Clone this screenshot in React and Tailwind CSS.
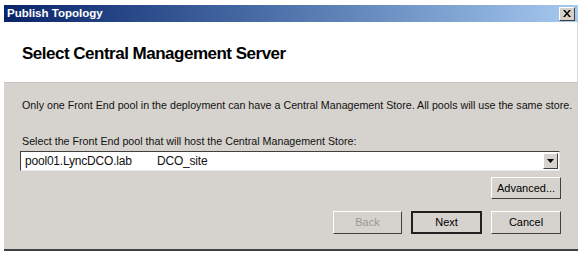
export default function App() {
  const font = { fontFamily: "Tahoma, 'DejaVu Sans', sans-serif" };
  return (
    <div className="w-[582px] h-[254px] bg-white overflow-hidden">
      <div className="ml-[4px] mt-[5px] w-[574px] flex flex-col" style={font}>
        {/* Title bar */}
        <div className="h-[17px] flex items-center justify-between bg-gradient-to-r from-[#0a246a] to-[#a6caf0] pl-[3px] pr-[3px]">
          <span className="text-white font-bold text-[11.5px] leading-none font-['Liberation_Sans',sans-serif]">Publish Topology</span>
          <div className="w-[16px] h-[14px] bg-[#d4d0c8] border border-t-white border-l-white border-r-[#404040] border-b-[#404040] flex items-center justify-center">
            <svg width="8" height="7" viewBox="0 0 8 7">
              <path d="M0 0h2l2 2.5L6 0h2L5 3.5 8 7H6L4 4.5 2 7H0l3-3.5z" fill="#000" />
            </svg>
          </div>
        </div>
        {/* Header */}
        <div className="h-[60px] bg-white border-r border-[#d8d8d8] pl-[18px] pt-[21px]">
          <div className="text-[17px] font-bold text-black leading-[22px] tracking-[-0.5px] font-['Liberation_Sans',sans-serif]">Select Central Management Server</div>
        </div>
        {/* Body */}
        <div className="h-[167px] bg-[#d6d3ce] border-t border-[#c8c5c0] flex flex-col pl-[18px] pr-[16px] font-['Liberation_Sans',sans-serif] text-[10.7px] text-[#111]">
          <div className="mt-[15px] leading-[14px] whitespace-nowrap">Only one Front End pool in the deployment can have a Central Management Store. All pools will use the same store.</div>
          <div className="mt-[22px] leading-[14px] whitespace-nowrap">Select the Front End pool that will host the Central Management Store:</div>
          <div className="mt-[3px] ml-[-2px] w-[540px] h-[20px] bg-white border border-t-[#404040] border-l-[#404040] border-r-[#e8e8e8] border-b-[#e8e8e8] flex items-center">
            <div className="flex-1 flex items-center text-[12px] pl-[4px] tracking-[-0.2px]">
              <span className="w-[132px]">pool01.LyncDCO.lab</span>
              <span>DCO_site</span>
            </div>
            <div className="w-[15px] h-[16px] mr-[1px] bg-[#d6d3ce] border border-t-white border-l-white border-r-[#404040] border-b-[#404040] flex items-center justify-center">
              <svg width="7" height="4" viewBox="0 0 7 4"><path d="M0 0h7L3.5 4z" fill="#000" /></svg>
            </div>
          </div>
          <div className="flex justify-end mt-[6px] mr-[1px]">
            <button className="w-[70px] h-[22px] bg-[#d6d3ce] border border-t-white border-l-white border-r-[#404040] border-b-[#404040] text-[11px] text-black">Advanced...</button>
          </div>
          <div className="flex justify-end gap-[9px] mt-[12px] mr-[1px]">
            <button className="w-[69px] h-[23px] bg-[#d6d3ce] border border-t-white border-l-white border-r-[#404040] border-b-[#404040] text-[11px] text-[#9a9892]">Back</button>
            <button className="w-[71px] h-[23px] bg-[#d6d3ce] border-2 border-[#202020] text-[11px] text-black">Next</button>
            <button className="w-[70px] h-[23px] bg-[#d6d3ce] border border-t-white border-l-white border-r-[#404040] border-b-[#404040] text-[11px] text-black">Cancel</button>
          </div>
        </div>
        <div className="h-[2px] bg-[#404040]" />
      </div>
    </div>
  );
}
